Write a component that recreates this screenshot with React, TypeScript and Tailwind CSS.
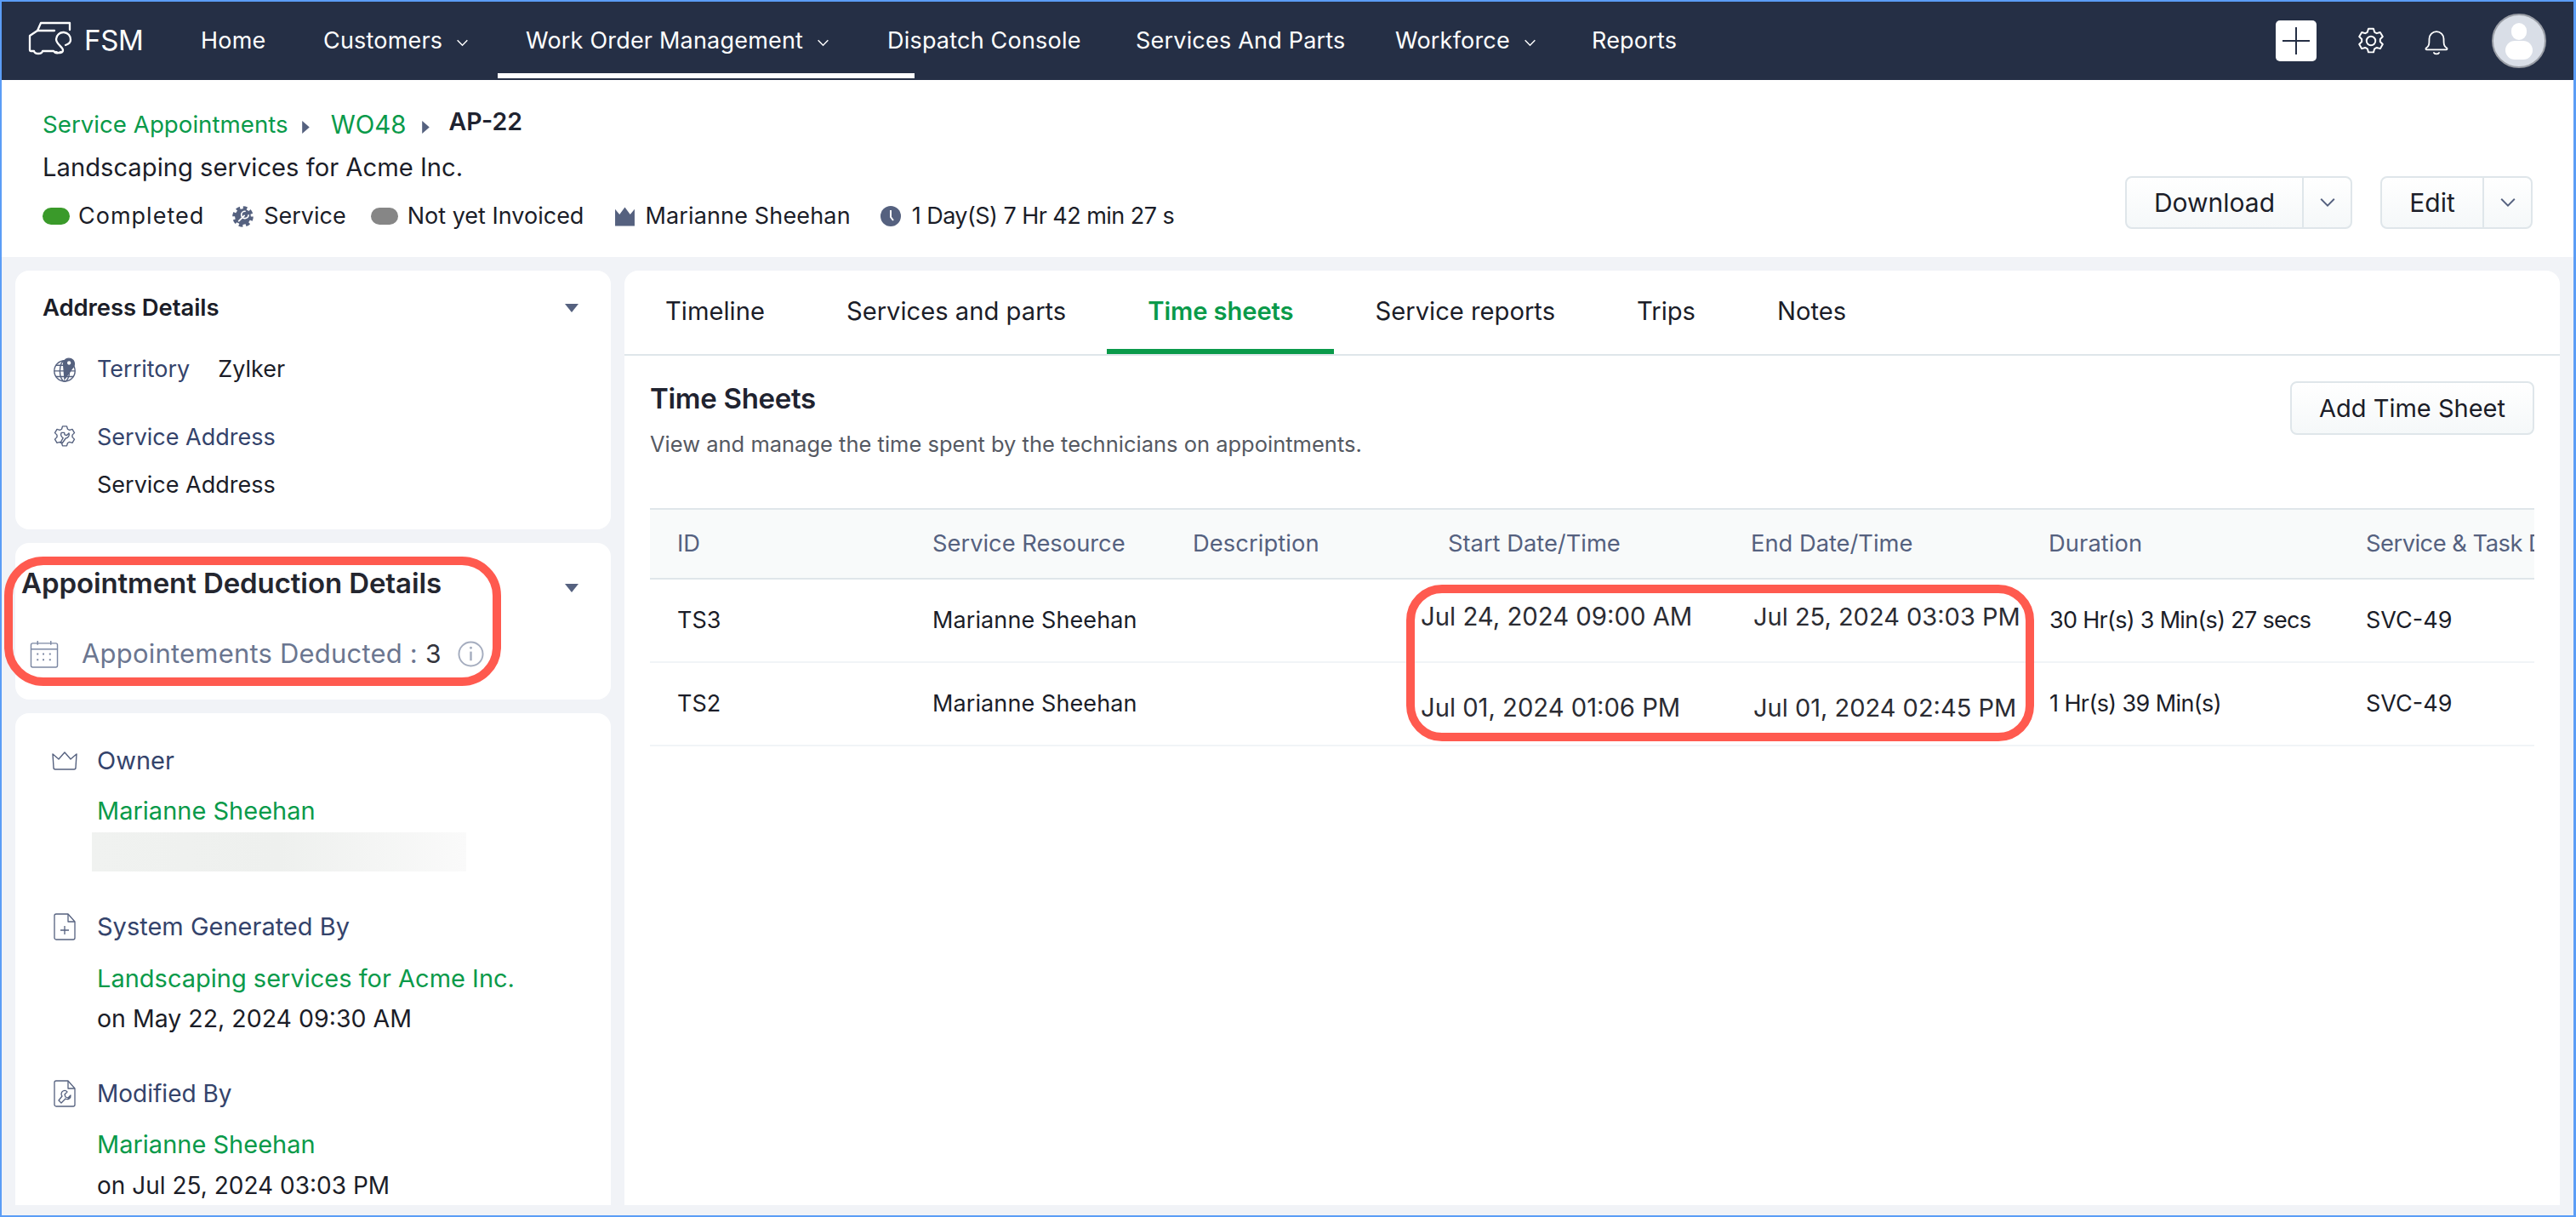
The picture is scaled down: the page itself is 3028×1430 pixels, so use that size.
import React from "react";

const Chevron = ({ className = "" }: { className?: string }) => (
  <svg viewBox="0 0 16 10" className={className} fill="none" stroke="currentColor" strokeWidth="1.6">
    <path d="M1.5 1.5 8 8l6.5-6.5" />
  </svg>
);
const Caret = ({ className = "" }: { className?: string }) => (
  <svg viewBox="0 0 16 10" className={className} fill="#55617f">
    <path d="M0 0h16L8 10z" />
  </svg>
);
const Arrow = () => (
  <svg viewBox="0 0 8 14" className="w-[9px] h-[15px]" fill="#55617f">
    <path d="M0 0l8 7-8 7z" />
  </svg>
);

const Logo = () => (
  <svg viewBox="13 5 54 40" className="w-[54px] h-[40px] -mt-[6px]" fill="none" stroke="#fff" strokeWidth="2.3" strokeLinejoin="round" strokeLinecap="round">
    <path d="M62 15V7H28l-4 9h20" />
    <path d="M24 16l-9 6v17q0 1 1 1h4c1 4 9 4 10 0h13c2 3 6 3 8 1" />
    <path d="M63 27a8.500 8.500 0 1 0-17-1c0 6 8 9 8 13 0 3-4 4-8 2" />
    <path d="M63 27c0 3-3 5-6 6" />
  </svg>
);

const NavItem = ({ label, dd, active, cls }: { label: string; dd?: boolean; active?: boolean; cls: string }) => (
  <div className={"relative flex items-center h-full " + cls}>
    <span className="tracking-[0.2px]">{label}</span>
    {dd && <Chevron className="w-[15px] h-[9px] ml-[16px] mt-[4px]" />}
    {active && <div className="absolute left-[-33px] right-[-32px] bottom-[2px] h-[6px] bg-white" />}
  </div>
);

const Row = ({ icon, label, children, cls, labelCls = "" }: { icon: React.ReactNode; label: string; children?: React.ReactNode; cls: string; labelCls?: string }) => (
  <div className={cls}>
    <div className="flex items-center h-[40px] pl-[42px]">
      <div className="w-[31px] mr-[23px] flex justify-center">{icon}</div>
      <span className={"text-[#34436b] " + labelCls}>{label}</span>
      {children}
    </div>
  </div>
);

const Line = ({ cls, text }: { cls: string; text: string }) => <div className={"h-[40px] flex items-center ml-[96px] " + cls}>{text}</div>;

const Pill = ({ color }: { color: string }) => <div className={"w-[32px] h-[20px] rounded-full shrink-0 " + color} />;

const Btn = ({ label, w, ww }: { label: string; w: string; ww: string }) => (
  <div className={"flex h-[62px] rounded-[8px] border-2 border-[#dfe6ea] bg-gradient-to-b from-white to-[#f5f8f9] " + ww}>
    <div className={"flex items-center justify-center border-r-2 border-[#dfe6ea] text-[#1c1e29] text-[30px] " + w}>{label}</div>
    <div className="flex-1 flex items-center justify-center text-[#55617f]">
      <Chevron className="w-[22px] h-[12px]" />
    </div>
  </div>
);

const cols = "grid grid-cols-[299px_307px_299px_356px_351px_372px_198px] pl-[33px] whitespace-nowrap items-center";

export default function App() {
  return (
    <div className="relative w-[3028px] h-[1430px] overflow-hidden border-t-2 border-b-2 border-l-2 border-r-[3px] border-[#5b9df6] bg-[#f1f3f7] flex flex-col font-['Inter',sans-serif] text-[27px] text-[#1b1d28]">
      <header className="h-[92px] bg-[#252f45] text-white flex items-center shrink-0">
        <div className="flex items-center h-full pl-[31px] w-[234px]">
          <Logo />
          <span className="ml-[12px] text-[33px] tracking-[-0.3px]">FSM</span>
        </div>
        <NavItem label="Home" cls="w-[144px]" />
        <NavItem label="Customers" dd cls="w-[238px]" />
        <NavItem label="Work Order Management" dd cls="w-[425px]" active />
        <NavItem label="Dispatch Console" cls="w-[292px]" />
        <NavItem label="Services And Parts" cls="w-[305px]" />
        <NavItem label="Workforce" dd cls="w-[231px]" />
        <NavItem label="Reports" cls="w-[120px]" />
        <div className="ml-auto flex items-center pr-[32px]">
          <div className="w-[48px] h-[48px] bg-white rounded-[5px] flex items-center justify-center">
            <svg viewBox="0 0 32 32" className="w-[32px] h-[32px]" stroke="#252f45" strokeWidth="2"><path d="M16 0v32M0 16h32" /></svg>
          </div>
          <svg viewBox="0 0 24 24" className="w-[36px] h-[36px] ml-[46px]" fill="none" stroke="#fff" strokeWidth="1.300" strokeLinejoin="round">
            <path d="M10 2.500h4l.8 2.700 1.700.9 2.700-.8 2 3.400-2 2v2l2 2-2 3.400-2.700-.8-1.700.9-.8 2.700h-4l-.8-2.700-1.700-.9-2.700.8-2-3.400 2-2v-2l-2-2 2-3.400 2.700.8 1.700-.9z" />
            <circle cx="12" cy="12" r="3.500" />
          </svg>
          <svg viewBox="0 0 24 28" className="w-[30px] h-[34px] ml-[44px]" fill="none" stroke="#fff" strokeWidth="1.500" strokeLinejoin="round" strokeLinecap="round">
            <path d="M2 21c3-2 3-4 3-9a7 7 0 0 1 14 0c0 5 0 7 3 9 .6.6.4 1.500-.6 1.500H2.600C1.600 22.500 1.400 21.600 2 21zM9.500 25.500c1 1.600 4 1.600 5 0" />
          </svg>
          <div className="w-[64px] h-[64px] ml-[50px] rounded-full bg-[#d9dee7] border-2 border-[#9a9ea6] flex flex-col items-center justify-center">
            <div className="w-[18px] h-[20px] rounded-full bg-white" />
            <div className="w-[32px] h-[22px] rounded-full bg-white mt-[1px]" />
          </div>
        </div>
      </header>

      <section className="h-[208px] bg-white shrink-0 flex justify-between pl-[48px] pr-[48px]">
        <div>
          <div className="flex items-start h-[40px] mt-[32px] whitespace-nowrap leading-[40px]">
            <span className="text-[#0a9a4a] text-[27.7px]">Service Appointments</span>
            <div className="ml-[16px] mt-[16px]"><Arrow /></div>
            <span className="ml-[25px] text-[#0a9a4a] text-[29.5px]">WO48</span>
            <div className="ml-[18px] mt-[16px]"><Arrow /></div>
            <span className="ml-[23px] font-semibold text-[28.5px] text-[#1f2330] -mt-[3px]">AP-22</span>
          </div>
          <div className="h-[40px] mt-[11px] flex items-center text-[29.2px]">Landscaping services for Acme Inc.</div>
          <div className="h-[40px] mt-[17px] flex items-center whitespace-nowrap">
            <Pill color="bg-[#3a9a2a]" />
            <span className="ml-[10px] tracking-[1px]">Completed</span>
            <svg viewBox="0 0 24 24" className="w-[25px] h-[27px] ml-[33px]" fill="none">
              <circle cx="12" cy="12" r="9" fill="#55617f" />
              <circle cx="12" cy="12" r="10" stroke="#55617f" strokeWidth="3.600" strokeDasharray="4.400 3.450" />
              <path d="M7.500 17l6-6" stroke="#fff" strokeWidth="1.800" strokeLinecap="round" />
              <path d="M14.500 6a4 4 0 1 0 3.800 4.400" stroke="#fff" strokeWidth="1.600" strokeLinecap="round" />
            </svg>
            <span className="ml-[12px]">Service</span>
            <div className="ml-[29px]"><Pill color="bg-[#868686]" /></div>
            <span className="ml-[11px]">Not yet Invoiced</span>
            <svg viewBox="0 0 24 22" className="w-[25px] h-[24px] ml-[36px]" fill="#55617f"><path d="M1 3l5 6 6-8 6 8 5-6v19H1z" /></svg>
            <span className="ml-[11px] tracking-[0.15px]">Marianne Sheehan</span>
            <svg viewBox="0 0 24 24" className="w-[24px] h-[24px] ml-[35px]">
              <circle cx="12" cy="12" r="12" fill="#55617f" />
              <path d="M12 5v8l3 4" stroke="#fff" strokeWidth="2" fill="none" />
            </svg>
            <span className="ml-[13px] tracking-[-0.55px]">1 Day(S) 7 Hr 42 min 27 s</span>
          </div>
        </div>
        <div className="flex pt-[113px] gap-[33px] h-fit">
          <Btn label="Download" w="w-[208px]" ww="w-[267px]" />
          <Btn label="Edit" w="w-[120px]" ww="w-[179px]" />
        </div>
      </section>

      <main className="flex-1 min-h-0 flex gap-[16px] pl-[16px] pr-[16px] pt-[16px] pb-[12px]">
        <aside className="w-[700px] shrink-0 flex flex-col gap-[16px]">
          <div className="h-[304px] bg-white rounded-[16px] pt-[24px]">
            <div className="flex items-center justify-between h-[40px] pl-[32px] pr-[38px]">
              <span className="font-semibold text-[27.5px] tracking-[-0.1px]">Address Details</span>
              <Caret className="w-[16px] h-[10px]" />
            </div>
            <Row
              cls="mt-[32px]"
              label="Territory"
              icon={
                <svg viewBox="0 0 30 32" className="w-[30px] h-[30px]" fill="none" stroke="#55617f" strokeWidth="1.500">
                  <circle cx="15" cy="18" r="13" />
                  <ellipse cx="15" cy="18" rx="6" ry="13" />
                  <path d="M2 18h26M4 11h22M4 25h22" />
                  <path d="M13.500 9a6.800 6.800 0 1 1 11.500 5L15 28z" fill="#55617f" />
                  <circle cx="20.500" cy="8" r="2.300" fill="#fff" stroke="none" />
                </svg>
              }
            >
              <span className="ml-[33px]">Zylker</span>
            </Row>
            <Row
              cls="mt-[40px]"
              label="Service Address"
              icon={
                <svg viewBox="0 0 24 24" className="w-[30px] h-[30px]" fill="none" stroke="#55617f" strokeWidth="1.100" strokeLinejoin="round">
                  <path d="M10 1.500h4l.8 2.700 1.700.9 2.700-.8 2 3.400-2 2v2l2 2-2 3.400-2.700-.8-1.700.9-.8 2.700h-4l-.8-2.700-1.700-.9-2.700.8-2-3.400 2-2v-2l-2-2 2-3.400 2.700.8 1.700-.9z" />
                  <path d="M9 7.500a3.600 3.600 0 0 0 1.500 5L8 17h2l3-4.200a3.600 3.600 0 0 0 3-4.800l-2 2-2-.5-.3-2z" />
                </svg>
              }
            />
            <Line cls="mt-[16px]" text="Service Address" />
          </div>

          <div className="relative h-[184px] bg-white rounded-[16px] pt-[25px]">
            <div className="flex justify-between h-[44px] pl-[7px] pr-[38px]">
              <span className="font-semibold text-[33px] text-[#24262f] leading-[44px] tracking-[-0.1px] whitespace-nowrap">Appointment Deduction Details</span>
              <Caret className="w-[16px] h-[10px] mt-[23px]" />
            </div>
            <div className="flex items-center h-[40px] mt-[41px] pl-[17px] whitespace-nowrap">
              <svg viewBox="0 0 34 34" className="w-[34px] h-[33px] shrink-0" fill="none" stroke="#7c88a3" strokeWidth="1.500">
                <rect x="1" y="4" width="32" height="29" rx="2" />
                <path d="M1 11h32M9 1v5M25 1v5" />
                <path d="M8 17h3M15 17h3M23 17h3M8 24h3M15 24h3M23 24h3" strokeWidth="2.200" strokeDasharray="2 1" />
              </svg>
              <span className="ml-[27px] text-[31px] text-[#6b7690] tracking-[0.2px]">Appointements Deducted :</span>
              <span className="ml-[9px] text-[30px] text-[#33343c]">3</span>
              <svg viewBox="0 0 32 32" className="w-[31px] h-[31px] ml-[20px] shrink-0" fill="none" stroke="#a5adbf" strokeWidth="2">
                <circle cx="16" cy="16" r="14.500" />
                <path d="M16 13v11" strokeWidth="2.500" />
                <circle cx="16" cy="8.500" r="1.500" fill="#a5adbf" stroke="none" />
              </svg>
            </div>
            <div className="absolute left-[-13px] top-[16px] w-[584px] h-[152px] rounded-[46px] border-[10px] border-[#ff5a4f]" />
          </div>

          <div className="flex-1 min-h-0 overflow-hidden bg-white rounded-t-[16px] pt-[36px]">
            <Row
              cls=""
              label="Owner"
              labelCls="text-[29px]"
              icon={
                <svg viewBox="0 0 30 22" className="w-[30px] h-[22px]" fill="none" stroke="#55617f" strokeWidth="1.400" strokeLinejoin="round">
                  <path d="M1 3l7 6 7-8 7 8 7-6-1 16a2 2 0 0 1-2 2H4a2 2 0 0 1-2-2z" />
                </svg>
              }
            />
            <Line cls="mt-[19px] text-[#0a9a4a] text-[29px]" text="Marianne Sheehan" />
            <div className="mt-[5px] ml-[90px] w-[440px] h-[46px] bg-gradient-to-r from-[#f0f2f0] via-[#eef0ee] to-[#fafafa]" />
            <Row
              cls="mt-[45px]"
              label="System Generated By"
              labelCls="text-[29px]"
              icon={
                <svg viewBox="0 0 26 32" className="w-[26px] h-[32px]" fill="none" stroke="#55617f" strokeWidth="1.300" strokeLinejoin="round">
                  <path d="M3 1h14l8 9v19a2 2 0 0 1-2 2H3a2 2 0 0 1-2-2V3a2 2 0 0 1 2-2z" />
                  <path d="M17 1v9h8M13 15v10M8 20h10" />
                </svg>
              }
            />
            <Line cls="mt-[21px] text-[#0a9a4a] text-[29px]" text="Landscaping services for Acme Inc." />
            <Line cls="mt-[7px] text-[28.5px]" text="on May 22, 2024 09:30 AM" />
            <Row
              cls="mt-[48px]"
              label="Modified By"
              labelCls="text-[28px]"
              icon={
                <svg viewBox="0 0 26 32" className="w-[26px] h-[32px]" fill="none" stroke="#55617f" strokeWidth="1.300" strokeLinejoin="round">
                  <path d="M3 1h14l8 9v19a2 2 0 0 1-2 2H3a2 2 0 0 1-2-2V3a2 2 0 0 1 2-2z" />
                  <path d="M17 1v9h8" />
                  <path d="M11 13a4 4 0 0 0-1 6l-4 5 3 3 5-5a4 4 0 0 0 6-4l-3 3-3-1-1-3 3-3a4 4 0 0 0-5-1z" />
                </svg>
              }
            />
            <Line cls="mt-[20px] text-[#0a9a4a] text-[29px]" text="Marianne Sheehan" />
            <Line cls="mt-[8px] text-[28px]" text="on Jul 25, 2024 03:03 PM" />
          </div>
        </aside>

        <div className="flex-1 min-w-0 bg-white rounded-t-[16px]">
          <nav className="flex h-[100px] border-b-2 border-[#dfe6ea] text-[#1b1d28] text-[29.2px]">
            <div className="px-[48px] flex items-center pb-[2px]">Timeline</div>
            <div className="px-[48px] flex items-center pb-[2px]">Services and parts</div>
            <div className="relative px-[48px] flex items-center pb-[2px] text-[#0a9a4a] font-semibold tracking-[-0.1px]">
              Time sheets
              <div className="absolute left-0 right-0 bottom-0 h-[6px] bg-[#0a9a4a]" />
            </div>
            <div className="px-[48px] flex items-center pb-[2px]">Service reports</div>
            <div className="px-[48px] flex items-center pb-[2px]">Trips</div>
            <div className="px-[48px] flex items-center pb-[2px]">Notes</div>
          </nav>
          <div className="px-[30px] pt-[30px]">
            <div className="flex justify-between h-[94px]">
              <div>
                <div className="h-[42px] flex items-center text-[33px] font-semibold text-[#1f2330] tracking-[-0.3px]">Time Sheets</div>
                <div className="h-[40px] mt-[12px] flex items-center text-[25.5px] text-[#555962]">View and manage the time spent by the technicians on appointments.</div>
              </div>
              <div className="w-[287px] h-[63px] rounded-[8px] border-2 border-[#dfe6ea] bg-gradient-to-b from-white to-[#f5f8f9] flex items-center justify-center text-[29px]">
                Add Time Sheet
              </div>
            </div>
            <div className="relative mt-[55px] overflow-hidden">
              <div className={cols + " h-[84px] border-y-2 border-[#dfe6ea] bg-[#f8fafa] text-[#55617f] text-[27.3px]"}>
                <span className="-ml-[1px]">ID</span>
                <span>Service Resource</span>
                <span className="-ml-[1px] tracking-[0.1px]">Description</span>
                <span>Start Date/Time</span>
                <span>End Date/Time</span>
                <span className="-ml-[1px] tracking-[0.1px]">Duration</span>
                <span className="tracking-[-0.5px]">Service &amp; Task Details</span>
              </div>
              <div className={cols + " h-[98px] border-b-2 border-[#f1f4f7]"}>
                <span className="-ml-[1px]">TS3</span>
                <span className="tracking-[0.1px]">Marianne Sheehan</span>
                <span />
                <span className="-ml-[32px] -mt-[8px] text-[29.3px] text-[#2b2c33]">Jul 24, 2024 09:00 AM</span>
                <span className="ml-[3px] -mt-[8px] text-[29px] text-[#2b2c33]">Jul 25, 2024 03:03 PM</span>
                <span className="tracking-[-0.7px]">30 Hr(s) 3 Min(s) 27 secs</span>
                <span>SVC-49</span>
              </div>
              <div className={cols + " h-[98px] border-b-2 border-[#f1f4f7]"}>
                <span className="-ml-[1px]">TS2</span>
                <span className="tracking-[0.1px]">Marianne Sheehan</span>
                <span />
                <span className="-ml-[32px] mt-[10px] text-[29.2px] text-[#2b2c33]">Jul 01, 2024 01:06 PM</span>
                <span className="ml-[3px] mt-[10px] text-[29px] text-[#2b2c33]">Jul 01, 2024 02:45 PM</span>
                <span className="tracking-[-0.6px]">1 Hr(s) 39 Min(s)</span>
                <span>SVC-49</span>
              </div>
              <div className="absolute left-[889px] top-[90px] w-[738px] h-[184px] rounded-[42px] border-[10px] border-[#ff5a4f]" />
            </div>
          </div>
        </div>
      </main>
    </div>
  );
}
